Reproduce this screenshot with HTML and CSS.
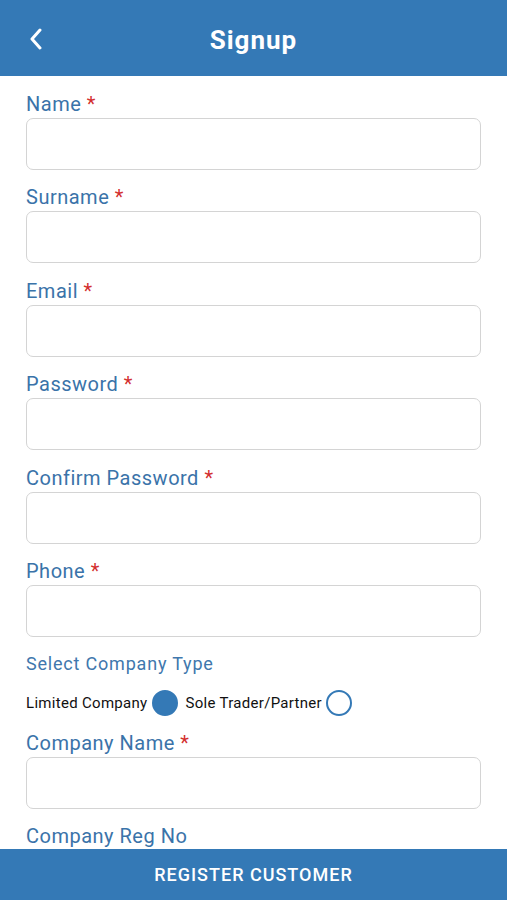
FILE: index.html
```html
<!DOCTYPE html>
<html>
<head>
<meta charset="utf-8">
<link rel="stylesheet" href="styles.css">
</head>
<body>
<div class="app">
  <header class="topbar">
    <svg class="back" width="14" height="22" viewBox="0 0 14 22"><path d="M11 2 L3 11 L11 20" fill="none" stroke="#fff" stroke-width="3" stroke-linecap="round" stroke-linejoin="round"/></svg>
    <h1 class="title">Signup</h1>
  </header>
  <main class="form">
    <div class="field"><label class="label">Name <span class="req">*</span></label><div class="input"></div></div>
    <div class="field"><label class="label">Surname <span class="req">*</span></label><div class="input"></div></div>
    <div class="field"><label class="label">Email <span class="req">*</span></label><div class="input"></div></div>
    <div class="field"><label class="label">Password <span class="req">*</span></label><div class="input"></div></div>
    <div class="field"><label class="label">Confirm Password <span class="req">*</span></label><div class="input"></div></div>
    <div class="field"><label class="label">Phone <span class="req">*</span></label><div class="input"></div></div>
    <div class="company-type">
      <div class="sub-label">Select Company Type</div>
      <div class="radios">
        <span class="radio-text">Limited Company</span><span class="radio checked"></span>
        <span class="radio-text">Sole Trader/Partner</span><span class="radio"></span>
      </div>
    </div>
    <div class="field"><label class="label">Company Name <span class="req">*</span></label><div class="input"></div></div>
    <div class="field"><label class="label">Company Reg No</label><div class="input"></div></div>
  </main>
  <footer class="bottombar">REGISTER CUSTOMER</footer>
</div>
</body>
</html>
```
FILE: styles.css
```css
* { box-sizing: border-box; }
html, body { margin: 0; padding: 0; background: #fff; }
body { font-family: Roboto, "Liberation Sans", sans-serif; }
.app { width: 507px; height: 900px; display: flex; flex-direction: column; overflow: hidden; }
.topbar { height: 76px; flex: none; background: #3479b6; position: relative; display: flex; align-items: center; justify-content: center; padding-top: 3px; }
.back { position: absolute; left: 29px; top: 28px; }
.title { margin: 0; color: #fff; font-size: 26px; font-weight: 700; line-height: 1; letter-spacing: 1px; }
.form { flex: 1; overflow: hidden; padding: 16px 26px 0 26px; display: flex; flex-direction: column; gap: 15.4px; }
.field { display: flex; flex-direction: column; gap: 2px; flex: none; }
.label { font-size: 20px; line-height: 24px; height: 24px; color: #3a73a9; letter-spacing: 0.5px; }
.req { color: #d32f2f; }
.input { height: 52px; width: 455px; border: 1.5px solid #d4d4d4; border-radius: 7px; background: #fff; }
.company-type { display: flex; flex-direction: column; margin-top: 1px; margin-bottom: -2px; flex: none; }
.sub-label { font-size: 18px; line-height: 22px; color: #4077ad; letter-spacing: 0.8px; }
.radios { display: flex; align-items: center; margin-top: 14px; height: 28px; }
.radio-text { font-size: 15px; color: #111; letter-spacing: 0.3px; }
.radio { width: 26px; height: 26px; border-radius: 50%; border: 2.5px solid #3479b6; margin: 0 8px 0 4px; }
.radio.checked { background: #3479b6; }
.bottombar { height: 51px; flex: none; background: #3479b6; color: #fff; font-size: 18px; font-weight: 500; letter-spacing: 1px; display: flex; align-items: center; justify-content: center; }
```
